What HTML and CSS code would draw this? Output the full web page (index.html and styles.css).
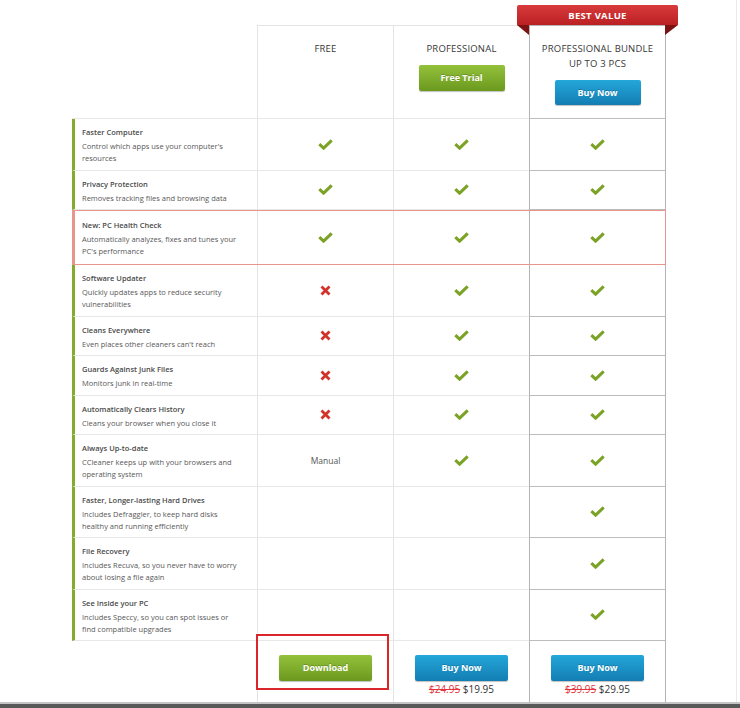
FILE: index.html
```html
<!DOCTYPE html>
<html lang="en">
<head>
<meta charset="utf-8">
<title>Compare plans</title>
<link rel="stylesheet" href="styles.css">
</head>
<body>
<svg width="0" height="0" class="defs">
  <defs>
    <symbol id="ok" viewBox="0 0 15 11"><polyline points="1.3,5.2 5.6,9.2 13.7,1.4" fill="none" stroke="#7aa326" stroke-width="3"/></symbol>
    <symbol id="no" viewBox="0 0 11 11"><path d="M1.5 1.5 L9.5 9.5 M9.5 1.5 L1.5 9.5" fill="none" stroke="#d3322b" stroke-width="2.8"/></symbol>
  </defs>
</svg>
<div class="page">
  <div class="pricing">
    <div class="row head">
      <div class="cell feat"></div>
      <div class="cell plan"><div class="plan-name">FREE</div></div>
      <div class="cell plan"><div class="plan-name">PROFESSIONAL</div><a class="btn green">Free Trial</a></div>
      <div class="cell plan best">
        <div class="ribbon">BEST VALUE</div>
        <div class="plan-name">PROFESSIONAL BUNDLE<br>UP TO 3 PCS</div>
        <a class="btn blue">Buy Now</a>
      </div>
    </div>

    <div class="row">
      <div class="cell feat"><div class="ft">Faster Computer</div><div class="fd">Control which apps use your computer's<br>resources</div></div>
      <div class="cell plan mark"><svg class="ic-ok"><use href="#ok"/></svg></div>
      <div class="cell plan mark"><svg class="ic-ok"><use href="#ok"/></svg></div>
      <div class="cell plan best mark"><svg class="ic-ok"><use href="#ok"/></svg></div>
    </div>

    <div class="row">
      <div class="cell feat"><div class="ft">Privacy Protection</div><div class="fd">Removes tracking files and browsing data</div></div>
      <div class="cell plan mark"><svg class="ic-ok"><use href="#ok"/></svg></div>
      <div class="cell plan mark"><svg class="ic-ok"><use href="#ok"/></svg></div>
      <div class="cell plan best mark"><svg class="ic-ok"><use href="#ok"/></svg></div>
    </div>

    <div class="row hl">
      <div class="cell feat"><div class="ft">New: PC Health Check</div><div class="fd">Automatically analyzes, fixes and tunes your<br>PC's performance</div></div>
      <div class="cell plan mark"><svg class="ic-ok"><use href="#ok"/></svg></div>
      <div class="cell plan mark"><svg class="ic-ok"><use href="#ok"/></svg></div>
      <div class="cell plan best mark"><svg class="ic-ok"><use href="#ok"/></svg></div>
    </div>

    <div class="row">
      <div class="cell feat"><div class="ft">Software Updater</div><div class="fd">Quickly updates apps to reduce security<br>vulnerabilities</div></div>
      <div class="cell plan mark"><svg class="ic-no"><use href="#no"/></svg></div>
      <div class="cell plan mark"><svg class="ic-ok"><use href="#ok"/></svg></div>
      <div class="cell plan best mark"><svg class="ic-ok"><use href="#ok"/></svg></div>
    </div>

    <div class="row">
      <div class="cell feat"><div class="ft">Cleans Everywhere</div><div class="fd">Even places other cleaners can't reach</div></div>
      <div class="cell plan mark"><svg class="ic-no"><use href="#no"/></svg></div>
      <div class="cell plan mark"><svg class="ic-ok"><use href="#ok"/></svg></div>
      <div class="cell plan best mark"><svg class="ic-ok"><use href="#ok"/></svg></div>
    </div>

    <div class="row">
      <div class="cell feat"><div class="ft">Guards Against Junk Files</div><div class="fd">Monitors junk in real-time</div></div>
      <div class="cell plan mark"><svg class="ic-no"><use href="#no"/></svg></div>
      <div class="cell plan mark"><svg class="ic-ok"><use href="#ok"/></svg></div>
      <div class="cell plan best mark"><svg class="ic-ok"><use href="#ok"/></svg></div>
    </div>

    <div class="row">
      <div class="cell feat"><div class="ft">Automatically Clears History</div><div class="fd">Cleans your browser when you close it</div></div>
      <div class="cell plan mark"><svg class="ic-no"><use href="#no"/></svg></div>
      <div class="cell plan mark"><svg class="ic-ok"><use href="#ok"/></svg></div>
      <div class="cell plan best mark"><svg class="ic-ok"><use href="#ok"/></svg></div>
    </div>

    <div class="row">
      <div class="cell feat"><div class="ft">Always Up-to-date</div><div class="fd">CCleaner keeps up with your browsers and<br>operating system</div></div>
      <div class="cell plan mark"><span class="manual">Manual</span></div>
      <div class="cell plan mark"><svg class="ic-ok"><use href="#ok"/></svg></div>
      <div class="cell plan best mark"><svg class="ic-ok"><use href="#ok"/></svg></div>
    </div>

    <div class="row">
      <div class="cell feat"><div class="ft">Faster, Longer-lasting Hard Drives</div><div class="fd">Includes Defraggler, to keep hard disks<br>healthy and running efficiently</div></div>
      <div class="cell plan mark"></div>
      <div class="cell plan mark"></div>
      <div class="cell plan best mark"><svg class="ic-ok"><use href="#ok"/></svg></div>
    </div>

    <div class="row">
      <div class="cell feat"><div class="ft">File Recovery</div><div class="fd">Includes Recuva, so you never have to worry<br>about losing a file again</div></div>
      <div class="cell plan mark"></div>
      <div class="cell plan mark"></div>
      <div class="cell plan best mark"><svg class="ic-ok"><use href="#ok"/></svg></div>
    </div>

    <div class="row">
      <div class="cell feat"><div class="ft">See Inside your PC</div><div class="fd">Includes Speccy, so you can spot issues or<br>find compatible upgrades</div></div>
      <div class="cell plan mark"></div>
      <div class="cell plan mark"></div>
      <div class="cell plan best mark"><svg class="ic-ok"><use href="#ok"/></svg></div>
    </div>

    <div class="row foot">
      <div class="cell feat"></div>
      <div class="cell plan cta"><a class="btn green">Download</a><div class="annot"></div></div>
      <div class="cell plan cta"><a class="btn blue">Buy Now</a><div class="price"><span class="old">$24.95</span> $19.95</div></div>
      <div class="cell plan best cta"><a class="btn blue">Buy Now</a><div class="price"><span class="old">$39.95</span> $29.95</div></div>
    </div>
  </div>
</div>
<div class="bar"></div>
</body>
</html>
```

FILE: styles.css
```css
* { box-sizing: border-box; }
html, body { margin: 0; padding: 0; }
body {
  width: 740px;
  height: 708px;
  overflow: hidden;
  background: #fff;
  font-family: "Open Sans", "Liberation Sans", sans-serif;
  display: flex;
  flex-direction: column;
}
.defs { position: absolute; }
.page {
  flex: 1;
  padding: 25px 0 0 72px;
  margin-right: 3px;
  border-right: 1px solid #ebebeb;
}
.pricing { width: 594px; }
.row {
  display: grid;
  grid-template-columns: 185px 136px 136px 137px;
  position: relative;
}
.cell { border-bottom: 1px solid #e8e8e8; }
.plan { border-left: 1px solid #e4e4e4; }
.best {
  border-left: 1px solid #b4b4b4;
  border-right: 1px solid #b4b4b4;
  border-bottom-color: #bdbdbd;
}
.feat {
  border-left: 3px solid #82ad2a;
  padding: 7px 6px 5.5px 7px;
}
.ft {
  font-size: 7.5px;
  line-height: 12px;
  font-weight: 600;
  color: #4a4a4a;
  white-space: nowrap;
}
.fd {
  margin-top: 2px;
  font-size: 7.5px;
  line-height: 12px;
  color: #585858;
  white-space: nowrap;
}
.mark {
  display: flex;
  align-items: center;
  justify-content: center;
}
.ic-ok { width: 15px; height: 11px; }
.ic-no { width: 11px; height: 11px; }
.manual { font-size: 8.5px; color: #555; }

/* header */
.head { height: 94px; }
.head .feat { border-left: 0; }
.head .plan {
  border-top: 1px solid #e4e4e4;
  text-align: center;
  padding-top: 15px;
}
.head .best { border-top-color: #b4b4b4; position: relative; }
.plan-name {
  font-size: 9.5px;
  line-height: 15px;
  font-weight: 500;
  color: #383838;
  letter-spacing: 0.2px;
}
.ribbon {
  position: absolute;
  left: -13px;
  top: -21px;
  width: 161px;
  height: 20px;
  line-height: 21px;
  background: linear-gradient(#d93b3b, #bb2024);
  border-radius: 2px 2px 0 0;
  color: #fff;
  font-size: 9.5px;
  font-weight: 700;
  letter-spacing: 0.3px;
  text-align: center;
}
.ribbon::before,
.ribbon::after {
  content: "";
  position: absolute;
  top: 100%;
  width: 0;
  height: 0;
  border-top: 10px solid #7c1313;
}
.ribbon::before { left: 0; border-left: 12px solid transparent; }
.ribbon::after { right: 0; border-right: 13px solid transparent; }

/* buttons */
.btn {
  display: block;
  margin: 0 auto;
  width: 86px;
  height: 26px;
  line-height: 26px;
  border-radius: 2px;
  color: #fff;
  font-size: 9px;
  font-weight: 700;
  text-align: center;
  text-shadow: 0 -1px 0 rgba(0, 0, 0, 0.2);
  box-shadow: 0 1px 1px rgba(0, 0, 0, 0.25);
}
.green { background: linear-gradient(#94c13b, #6b991e); }
.blue { background: linear-gradient(#24a7d9, #137db3); }
.head .btn { margin-top: 9px; }
.head .best .btn { height: 25px; line-height: 25px; }

/* highlighted row */
.hl { outline: 1px solid #e8958d; outline-offset: -1px; z-index: 1; }
.hl .feat { border-left-color: #e8958d; padding-top: 9px; padding-bottom: 7px; }

/* footer */
.foot { height: 61px; }
.foot .feat { border: 0; }
.foot .cell { border-bottom: 0; }
.cta { text-align: center; padding-top: 14px; position: relative; }
.foot .btn { width: 93px; }
.price {
  margin-top: 2px;
  font-size: 10px;
  line-height: 12px;
  color: #333;
}
.old { color: #e2343a; text-decoration: line-through; }
.annot {
  position: absolute;
  left: -2px;
  top: -7px;
  width: 133px;
  height: 56px;
  border: 2px solid #d9262b;
}

.bar {
  height: 6px;
  border-top: 2px solid #c4c4c4;
  background: #585858;
}
```
